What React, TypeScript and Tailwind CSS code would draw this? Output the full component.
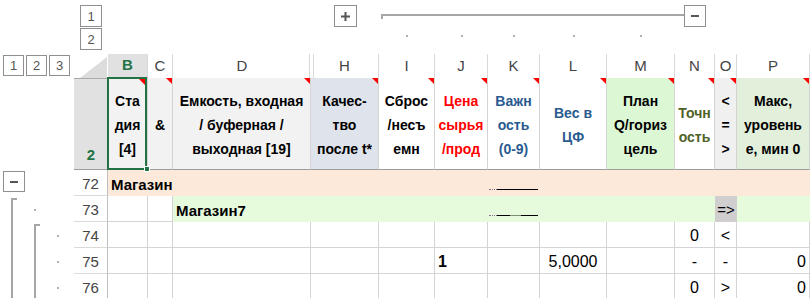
import React from "react";

const GRID =
  "grid grid-cols-[74px_34px_40px_25px_138px_68px_56px_53px_52px_67px_68px_40px_22px_73px]";

function Btn({ children, className = "" }: { children?: React.ReactNode; className?: string }) {
  return (
    <div
      className={`flex items-center justify-center border border-[#8f8f8f] bg-white text-[13px] leading-none text-[#555] ${className}`}
    >
      {children}
    </div>
  );
}

function Minus() {
  return <div className="w-[8px] h-[2px] bg-[#555]" />;
}

function Plus() {
  return (
    <svg width="9" height="9" viewBox="0 0 9 9">
      <rect x="0" y="3.5" width="9" height="2" fill="#555" />
      <rect x="3.5" y="0" width="2" height="9" fill="#555" />
    </svg>
  );
}

function Tri({ className = "right-0 top-0" }: { className?: string }) {
  return (
    <div
      className={`absolute ${className} w-0 h-0 border-l-[6px] border-l-transparent border-t-[6px] border-t-[#ff0000]`}
    />
  );
}

const VLine = () => <div className="ml-[11px] w-[2px] h-full bg-[#a6a6a6]" />;
const BStart = () => (
  <div className="ml-[11px] mt-[2px] w-[6px] h-full border-l-2 border-t-2 border-[#a6a6a6]" />
);
const Dot = () => <div className="ml-[11px] mt-[13px] w-[2px] h-[2px] bg-[#b0b0b0]" />;

function Gutter({ a, b, c }: { a?: React.ReactNode; b?: React.ReactNode; c?: React.ReactNode }) {
  return (
    <div className="flex h-full">
      <div className="w-[23px] h-full overflow-hidden">{a}</div>
      <div className="w-[23px] h-full overflow-hidden">{b}</div>
      <div className="w-[23px] h-full overflow-hidden">{c}</div>
    </div>
  );
}

function RowHead({ n }: { n: string }) {
  return (
    <div className="flex items-end justify-center border-r border-b border-r-[#bfbfbf] border-b-[#dadada] pb-[1px] text-[15px] leading-[20px] text-[#444]">
      {n}
    </div>
  );
}

function ColHead({ l, sel = false }: { l: string; sel?: boolean }) {
  return sel ? (
    <div className="flex items-center justify-center border-r border-r-[#d9d9d9] border-b-2 border-b-[#217346] bg-[#e1e1e1] text-[15px] font-bold text-[#217346]">
      {l}
    </div>
  ) : (
    <div className="flex items-center justify-center border-r border-b border-r-[#d9d9d9] border-b-[#ababab] text-[15px] text-[#444]">
      {l}
    </div>
  );
}

function HCell({
  children,
  className = "",
}: {
  children?: React.ReactNode;
  className?: string;
}) {
  return (
    <div
      className={`relative flex items-center justify-center text-center font-bold text-[14px] leading-[24px] border-r border-b border-r-[#d4d4d4] border-b-[#9c9c9c] ${className}`}
    >
      <div className="pt-[2px]">{children}</div>
      <Tri />
    </div>
  );
}

function Trunc({ mixed = false }: { mixed?: boolean }) {
  return (
    <div className="flex items-center h-px">
      <div className="w-[8px] h-px border-t border-dotted border-[#8a6d8a]" />
      {mixed ? (
        <>
          <div className="w-[13px] h-px bg-black" />
          <div className="w-[11px] h-px bg-[#7f8f6f]" />
          <div className="w-[17px] h-px bg-black" />
        </>
      ) : (
        <div className="w-[41px] h-px bg-black" />
      )}
    </div>
  );
}

const W = "flex items-end border-r border-b border-[#d4d4d4] pb-[1px] text-[16px] leading-[20px]";
const PEACH = "bg-[#fde9d9]";
const GREEN = "bg-[#e6fadc]";

export default function App() {
  return (
    <div className="w-[810px] h-[298px] overflow-hidden bg-white font-['Liberation_Sans',Arial,sans-serif] text-black">
      {/* outline area */}
      <div className={`${GRID} h-[54px]`}>
        <div />
        <div className="flex flex-col gap-[1px] pt-[5px] pl-[6px]">
          <Btn className="w-[22px] h-[22px]">1</Btn>
          <Btn className="w-[22px] h-[22px]">2</Btn>
        </div>
        <div />
        <div />
        <div />
        <div className="flex justify-center pt-[5px]">
          <Btn className="w-[23px] h-[22px]">
            <Plus />
          </Btn>
        </div>
        <div className="flex flex-col">
          <div className="mt-[14px] ml-[2px] h-[5px] border-t-2 border-l-2 border-[#a6a6a6]" />
          <div className="mt-[16px] mx-auto w-[2px] h-[2px] bg-[#b0b0b0]" />
        </div>
        <div className="flex flex-col">
          <div className="mt-[14px] h-[2px] bg-[#a6a6a6]" />
          <div className="mt-[19px] mx-auto w-[2px] h-[2px] bg-[#b0b0b0]" />
        </div>
        <div className="flex flex-col">
          <div className="mt-[14px] h-[2px] bg-[#a6a6a6]" />
          <div className="mt-[19px] mx-auto w-[2px] h-[2px] bg-[#b0b0b0]" />
        </div>
        <div className="flex flex-col">
          <div className="mt-[14px] h-[2px] bg-[#a6a6a6]" />
          <div className="mt-[19px] mx-auto w-[2px] h-[2px] bg-[#b0b0b0]" />
        </div>
        <div className="flex flex-col">
          <div className="mt-[14px] h-[2px] bg-[#a6a6a6]" />
          <div className="mt-[19px] mx-auto w-[2px] h-[2px] bg-[#b0b0b0]" />
        </div>
        <div className="flex items-start pt-[5px]">
          <div className="mt-[9px] w-[9px] h-[2px] bg-[#a6a6a6]" />
          <Btn className="w-[22px] h-[22px] shrink-0">
            <Minus />
          </Btn>
        </div>
        <div />
        <div />
      </div>

      {/* column header */}
      <div className={`${GRID} h-[24px]`}>
        <div className="flex gap-[2px] pl-[3px] pt-[1px]">
          <Btn className="w-[21px] h-[21px]">1</Btn>
          <Btn className="w-[21px] h-[21px]">2</Btn>
          <Btn className="w-[21px] h-[21px]">3</Btn>
        </div>
        <div className="relative border-b border-[#ababab]">
          <div className="absolute right-[1px] bottom-0 w-0 h-0 border-l-[27px] border-l-transparent border-b-[21px] border-b-[#dcdcdc]" />
        </div>
        <ColHead l="B" sel />
        <ColHead l="C" />
        <div className="relative flex items-center justify-center border-b border-b-[#ababab] text-[15px] text-[#444]">
          D
          <div className="absolute right-[1px] top-0 bottom-0 w-px bg-[#d9d9d9]" />
        </div>
        <div className="relative flex items-center justify-center border-r border-b border-r-[#d9d9d9] border-b-[#ababab] text-[15px] text-[#444]">
          H
          <div className="absolute left-[2px] top-0 bottom-0 w-px bg-[#d9d9d9]" />
        </div>
        <ColHead l="I" />
        <ColHead l="J" />
        <ColHead l="K" />
        <ColHead l="L" />
        <ColHead l="M" />
        <ColHead l="N" />
        <ColHead l="O" />
        <ColHead l="P" />
      </div>

      {/* header row 2 */}
      <div className={`${GRID} h-[92px]`}>
        <div />
        <div className="flex items-end justify-center border-b border-[#9c9c9c] bg-[#e1e1e1] pb-[4px] text-[15px] leading-[20px] font-bold text-[#217346]">
          2
        </div>
        <div className="relative flex items-center justify-center text-center font-bold text-[14px] leading-[24px] border-r border-b border-r-[#d4d4d4] border-b-[#9c9c9c] bg-[#f2f2f2]">
          <div className="pt-[2px]">
            Ста
            <br />
            дия
            <br />
            [4]
          </div>
          <Tri className="right-[2px] top-[1px]" />
          <div className="absolute -left-px -top-px right-0 -bottom-px z-20 border-2 border-[#217346]" />
          <div className="absolute -right-[3px] -bottom-[3px] z-30 w-[6px] h-[6px] bg-[#217346] border border-white" />
        </div>
        <HCell className="bg-[#f2f2f2]">&amp;</HCell>
        <HCell className="bg-[#f2f2f2]">
          Емкость, входная
          <br />/ буферная /
          <br />
          выходная [19]
        </HCell>
        <HCell className="bg-[#dfe3eb]">
          Качес-
          <br />
          тво
          <br />
          после t*
        </HCell>
        <HCell className="bg-white">
          Сброс
          <br />
          /несъ
          <br />
          емн
        </HCell>
        <HCell className="bg-white text-[#ff0000]">
          Цена
          <br />
          сырья
          <br />
          /прод
        </HCell>
        <HCell className="bg-white text-[#2a5a8f]">
          Важн
          <br />
          ость
          <br />
          (0-9)
        </HCell>
        <HCell className="bg-white text-[#2a5a8f]">
          Вес в
          <br />
          ЦФ
        </HCell>
        <HCell className="bg-[#dcf7d4]">
          План
          <br />
          Q/гориз
          <br />
          цель
        </HCell>
        <HCell className="bg-white text-[#4f6228]">
          Точн
          <br />
          ость
        </HCell>
        <HCell className="bg-[#f0f0f0]">
          &lt;
          <br />=
          <br />
          &gt;
        </HCell>
        <HCell className="bg-[#e2efda]">
          Макс,
          <br />
          уровень
          <br />
          е, мин 0
        </HCell>
      </div>

      {/* row 72 */}
      <div className={`${GRID} h-[26px]`}>
        <div className="pl-[3px] pt-[1px]">
          <Btn className="w-[22px] h-[21px]">
            <Minus />
          </Btn>
        </div>
        <RowHead n="72" />
        <div className={`relative z-10 flex items-end ${PEACH} pl-[3px] pb-[1px] text-[15px] leading-[20px] font-bold whitespace-nowrap`}>
          Магазин
        </div>
        <div className={PEACH} />
        <div className={PEACH} />
        <div className={PEACH} />
        <div className={PEACH} />
        <div className={PEACH} />
        <div className={`flex items-end ${PEACH} pb-[6px] pl-[1px]`}>
          <Trunc />
        </div>
        <div className={PEACH} />
        <div className={PEACH} />
        <div className={PEACH} />
        <div className={PEACH} />
        <div className={PEACH} />
      </div>

      {/* row 73 */}
      <div className={`${GRID} h-[26px]`}>
        <Gutter a={<BStart />} b={<Dot />} />
        <RowHead n="73" />
        <div className={W} />
        <div className={W} />
        <div className={`relative z-10 flex items-end ${GREEN} pl-[3px] pb-[1px] text-[15px] leading-[20px] font-bold whitespace-nowrap`}>
          Магазин7
        </div>
        <div className={GREEN} />
        <div className={GREEN} />
        <div className={GREEN} />
        <div className={`flex items-end ${GREEN} pb-[6px] pl-[1px]`}>
          <Trunc mixed />
        </div>
        <div className={GREEN} />
        <div className={GREEN} />
        <div className={GREEN} />
        <div className="flex items-end justify-center bg-[#d0cece] pb-[2px] text-[15px] leading-[20px]">
          =&gt;
        </div>
        <div className={GREEN} />
      </div>

      {/* row 74 */}
      <div className={`${GRID} h-[26px]`}>
        <Gutter a={<VLine />} b={<BStart />} c={<Dot />} />
        <RowHead n="74" />
        <div className={W} />
        <div className={W} />
        <div className={W} />
        <div className={W} />
        <div className={W} />
        <div className={W} />
        <div className={W} />
        <div className={W} />
        <div className={W} />
        <div className={`${W} justify-center`}>0</div>
        <div className={`${W} justify-center`}>&lt;</div>
        <div className={W} />
      </div>

      {/* row 75 */}
      <div className={`${GRID} h-[26px]`}>
        <Gutter a={<VLine />} b={<VLine />} c={<Dot />} />
        <RowHead n="75" />
        <div className={W} />
        <div className={W} />
        <div className={W} />
        <div className={W} />
        <div className={W} />
        <div className={`${W} pl-[3px] font-bold`}>1</div>
        <div className={W} />
        <div className={`${W} justify-center`}>5,0000</div>
        <div className={W} />
        <div className={`${W} justify-center`}>-</div>
        <div className={`${W} justify-center`}>-</div>
        <div className={`${W} justify-end pr-[3px]`}>0</div>
      </div>

      {/* row 76 */}
      <div className={`${GRID} h-[26px]`}>
        <Gutter a={<VLine />} b={<VLine />} c={<Dot />} />
        <RowHead n="76" />
        <div className={W} />
        <div className={W} />
        <div className={W} />
        <div className={W} />
        <div className={W} />
        <div className={W} />
        <div className={W} />
        <div className={W} />
        <div className={W} />
        <div className={`${W} justify-center`}>0</div>
        <div className={`${W} justify-center`}>&gt;</div>
        <div className={`${W} justify-end pr-[3px]`}>0</div>
      </div>
    </div>
  );
}
